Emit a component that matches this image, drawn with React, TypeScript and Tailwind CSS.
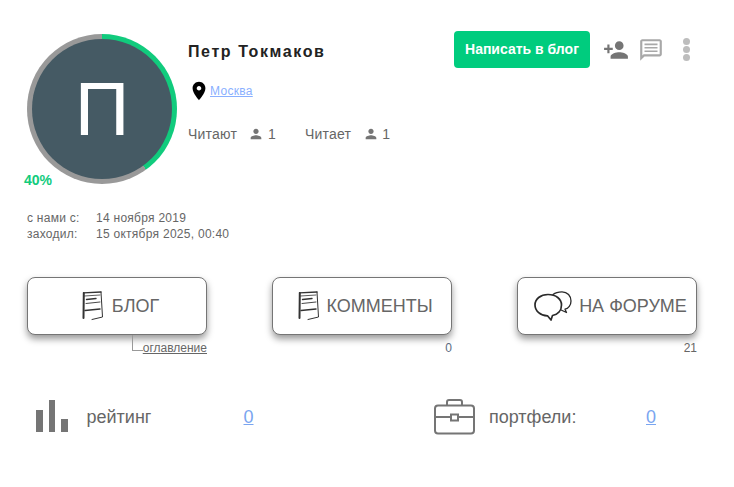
const Person = ({ className }: { className: string }) => (
    <svg viewBox="0 0 24 24" className={className} fill="currentColor">
        <path d="M12 12c2.21 0 4-1.79 4-4s-1.79-4-4-4-4 1.79-4 4 1.79 4 4 4zm0 2c-2.67 0-8 1.34-8 4v2h16v-2c0-2.66-5.33-4-8-4z" />
    </svg>
);

const DocIcon = () => (
    <svg viewBox="0 0 22 30" className="w-[22px] h-[30px] shrink-0" fill="none" stroke="#333" strokeLinecap="round">
        <path d="M1.5 1.8 L19 1" strokeWidth="1.3" />
        <path d="M1.8 2 L1.5 27" strokeWidth="2" />
        <path d="M19 1 L20.5 26 L10 28.5" strokeWidth="1" />
        <path d="M2.5 5 L18 4" strokeWidth="0.8" />
        <path d="M4.5 8.5 L14 7.5" strokeWidth="1.4" />
        <path d="M4 12.5 L18 11" strokeWidth="0.9" />
        <path d="M3 19.5 L18 18" strokeWidth="1.4" />
    </svg>
);

const ForumIcon = () => (
    <svg viewBox="0 0 38 30" className="w-[38px] h-[30px] shrink-0" fill="none" stroke="#2a2a2a" strokeLinecap="round" strokeLinejoin="round">
        <path d="M19 3.5 C22 1 25 0.8 28 0.8 C33.5 0.8 37 5 37 10 C37 14 34.5 17.5 31 18.2 L32.5 21.5 L26 18.5" strokeWidth="1.3" />
        <path d="M14 3.5 C6.5 3.5 1 8 1 14 C1 20 6.5 24.5 13.5 24.8 L17 29 L18.5 24.5 C24 23.5 27.5 19.5 27.5 14 C27.5 8 22 3.5 14 3.5 Z" strokeWidth="1.7" fill="#fff" />
    </svg>
);

const NavButton = ({ icon, label, gap }: { icon: React.ReactNode; label: string; gap: string }) => (
    <div className={`h-[58px] w-full flex items-center justify-center pl-[7px] ${gap} bg-white border border-[#757575] rounded-[8px] shadow-[0_4px_7px_rgba(0,0,0,0.4)] text-[18px] text-[#666]`}>
        {icon}
        <span>{label}</span>
    </div>
);

const App = () => {
    return (
        <div className="w-[734px] h-[487px] bg-white px-[27px] pt-[31px] font-['Liberation_Sans',Arial,sans-serif] text-[#666] overflow-hidden">
            <div className="flex">
                <div className="relative mt-[3px] w-[150px] h-[150px] rounded-full p-[5px] bg-[conic-gradient(#11cb7d_0_40%,#999_40%_100%)] shrink-0">
                    <div className="w-full h-full rounded-full bg-[#455a64] flex items-center justify-center text-white text-[76px] leading-none">
                        П
                    </div>
                    <span className="absolute left-[-3px] top-[136px] text-[14px] font-bold text-[#11cb7d]">40%</span>
                </div>
                <div className="ml-[11px] flex-1">
                    <div className="flex items-start">
                        <h1 className="mt-[11px] text-[16px] leading-[20px] font-bold tracking-[1.6px] text-[#222]">Петр Токмаков</h1>
                        <div className="ml-auto mr-[2px] flex items-center">
                            <div className="w-[136px] h-[37px] flex items-center justify-center rounded-[4px] bg-[#00cc7e] text-white text-[14px] font-bold">
                                Написать в блог
                            </div>
                            <svg viewBox="0 0 24 24" className="ml-[13px] w-[26px] h-[26px] text-[#757575]" fill="currentColor">
                                <path d="M15 12c2.21 0 4-1.79 4-4s-1.79-4-4-4-4 1.79-4 4 1.79 4 4 4zm-9-2V7H4v3H1v2h3v3h2v-3h3v-2H6zm9 4c-2.67 0-8 1.34-8 4v2h16v-2c0-2.66-5.33-4-8-4z" />
                            </svg>
                            <svg viewBox="0 0 24 24" className="ml-[9px] w-[26px] h-[26px] text-[#a8a8a8]" fill="currentColor">
                                <path d="M20 2H4c-1.1 0-2 .9-2 2v18l4-4h14c1.1 0 2-.9 2-2V4c0-1.1-.9-2-2-2zm0 14H5.17L4 17.17V4h16v12z" />
                                <path d="M6 6h12v1.5H6zM6 9.2h12v1.5H6zM6 12.4h12v1.5H6z" />
                            </svg>
                            <div className="ml-[19px] mr-[15px] flex flex-col gap-[1px]">
                                <span className="w-[7px] h-[7px] rounded-full bg-[#bdbdbd]" />
                                <span className="w-[7px] h-[7px] rounded-full bg-[#bdbdbd]" />
                                <span className="w-[7px] h-[7px] rounded-full bg-[#bdbdbd]" />
                            </div>
                        </div>
                    </div>
                    <div className="mt-[12px] flex items-center text-[12px] tracking-[0.3px]">
                        <svg viewBox="0 0 24 24" className="w-[22px] h-[22px]" fill="#000">
                            <path d="M12 2C8.13 2 5 5.13 5 9c0 5.25 7 13 7 13s7-7.75 7-13c0-3.87-3.13-7-7-7zm0 9.5c-1.38 0-2.5-1.12-2.5-2.5s1.12-2.5 2.5-2.5 2.5 1.12 2.5 2.5-1.12 2.5-2.5 2.5z" />
                        </svg>
                        <a className="underline text-[#8ab0ff]">Москва</a>
                    </div>
                    <div className="mt-[24px] flex items-center text-[14px] leading-[16px] tracking-[0.2px]">
                        <span>Читают</span>
                        <Person className="ml-[11px] w-[16px] h-[16px] text-[#757575]" />
                        <span className="ml-[4px]">1</span>
                        <span className="ml-[29px]">Читает</span>
                        <Person className="ml-[12px] w-[16px] h-[16px] text-[#757575]" />
                        <span className="ml-[3px]">1</span>
                    </div>
                </div>
            </div>

            <div className="mt-[26px] text-[12px] leading-[16px] tracking-[0.27px] text-[#666]">
                <div className="flex"><span className="w-[69px]">с нами с:</span><span>14 ноября 2019</span></div>
                <div className="flex"><span className="w-[69px]">заходил:</span><span>15 октября 2025, 00:40</span></div>
            </div>

            <div className="mt-[35px] grid grid-cols-[180px_180px_180px] gap-x-[65px]">
                <div>
                    <NavButton icon={<DocIcon />} label="БЛОГ" gap="gap-[8px]" />
                    <div className="flex justify-end text-[12px] leading-[14px]">
                        <div className="w-[11px] h-[16px] border-l border-b border-[#999]" />
                        <a className="mt-[6px] underline text-[#666]">оглавление</a>
                    </div>
                </div>
                <div>
                    <NavButton icon={<DocIcon />} label="КОММЕНТЫ" gap="gap-[6px]" />
                    <div className="mt-[6px] text-right text-[12px] leading-[14px] text-[#5a6b80]">0</div>
                </div>
                <div>
                    <NavButton icon={<ForumIcon />} label="НА ФОРУМЕ" gap="gap-[7px]" />
                    <div className="mt-[6px] text-right text-[12px] leading-[14px] text-[#666]">21</div>
                </div>
            </div>

            <div className="mt-[44px] flex items-center text-[18px] text-[#666]">
                <div className="flex items-center w-[407px]">
                    <div className="ml-[9px] -mt-[2px] flex items-end gap-[6px] h-[32px]">
                        <span className="w-[6.5px] h-[22px] bg-[#757575]" />
                        <span className="w-[6.5px] h-[32px] bg-[#757575]" />
                        <span className="w-[6.5px] h-[13px] bg-[#757575]" />
                    </div>
                    <span className="ml-[19px] w-[157px]">рейтинг</span>
                    <a className="underline text-[#7aa5f0]">0</a>
                </div>
                <div className="flex items-center">
                    <svg viewBox="0 0 42 36" className="w-[42px] h-[36px]" fill="none" stroke="#757575" strokeWidth="2">
                        <rect x="1" y="6.5" width="39" height="28" rx="3" />
                        <path d="M13 6.5 V3 a2 2 0 0 1 2-2 H26 a2 2 0 0 1 2 2 V6.5" />
                        <path d="M1 18 H17 M24 18 H40" />
                        <rect x="17" y="15.5" width="7" height="6" />
                    </svg>
                    <span className="ml-[13px] w-[157px]">портфели:</span>
                    <a className="underline text-[#7aa5f0]">0</a>
                </div>
            </div>
        </div>
    );
};

export default App;
